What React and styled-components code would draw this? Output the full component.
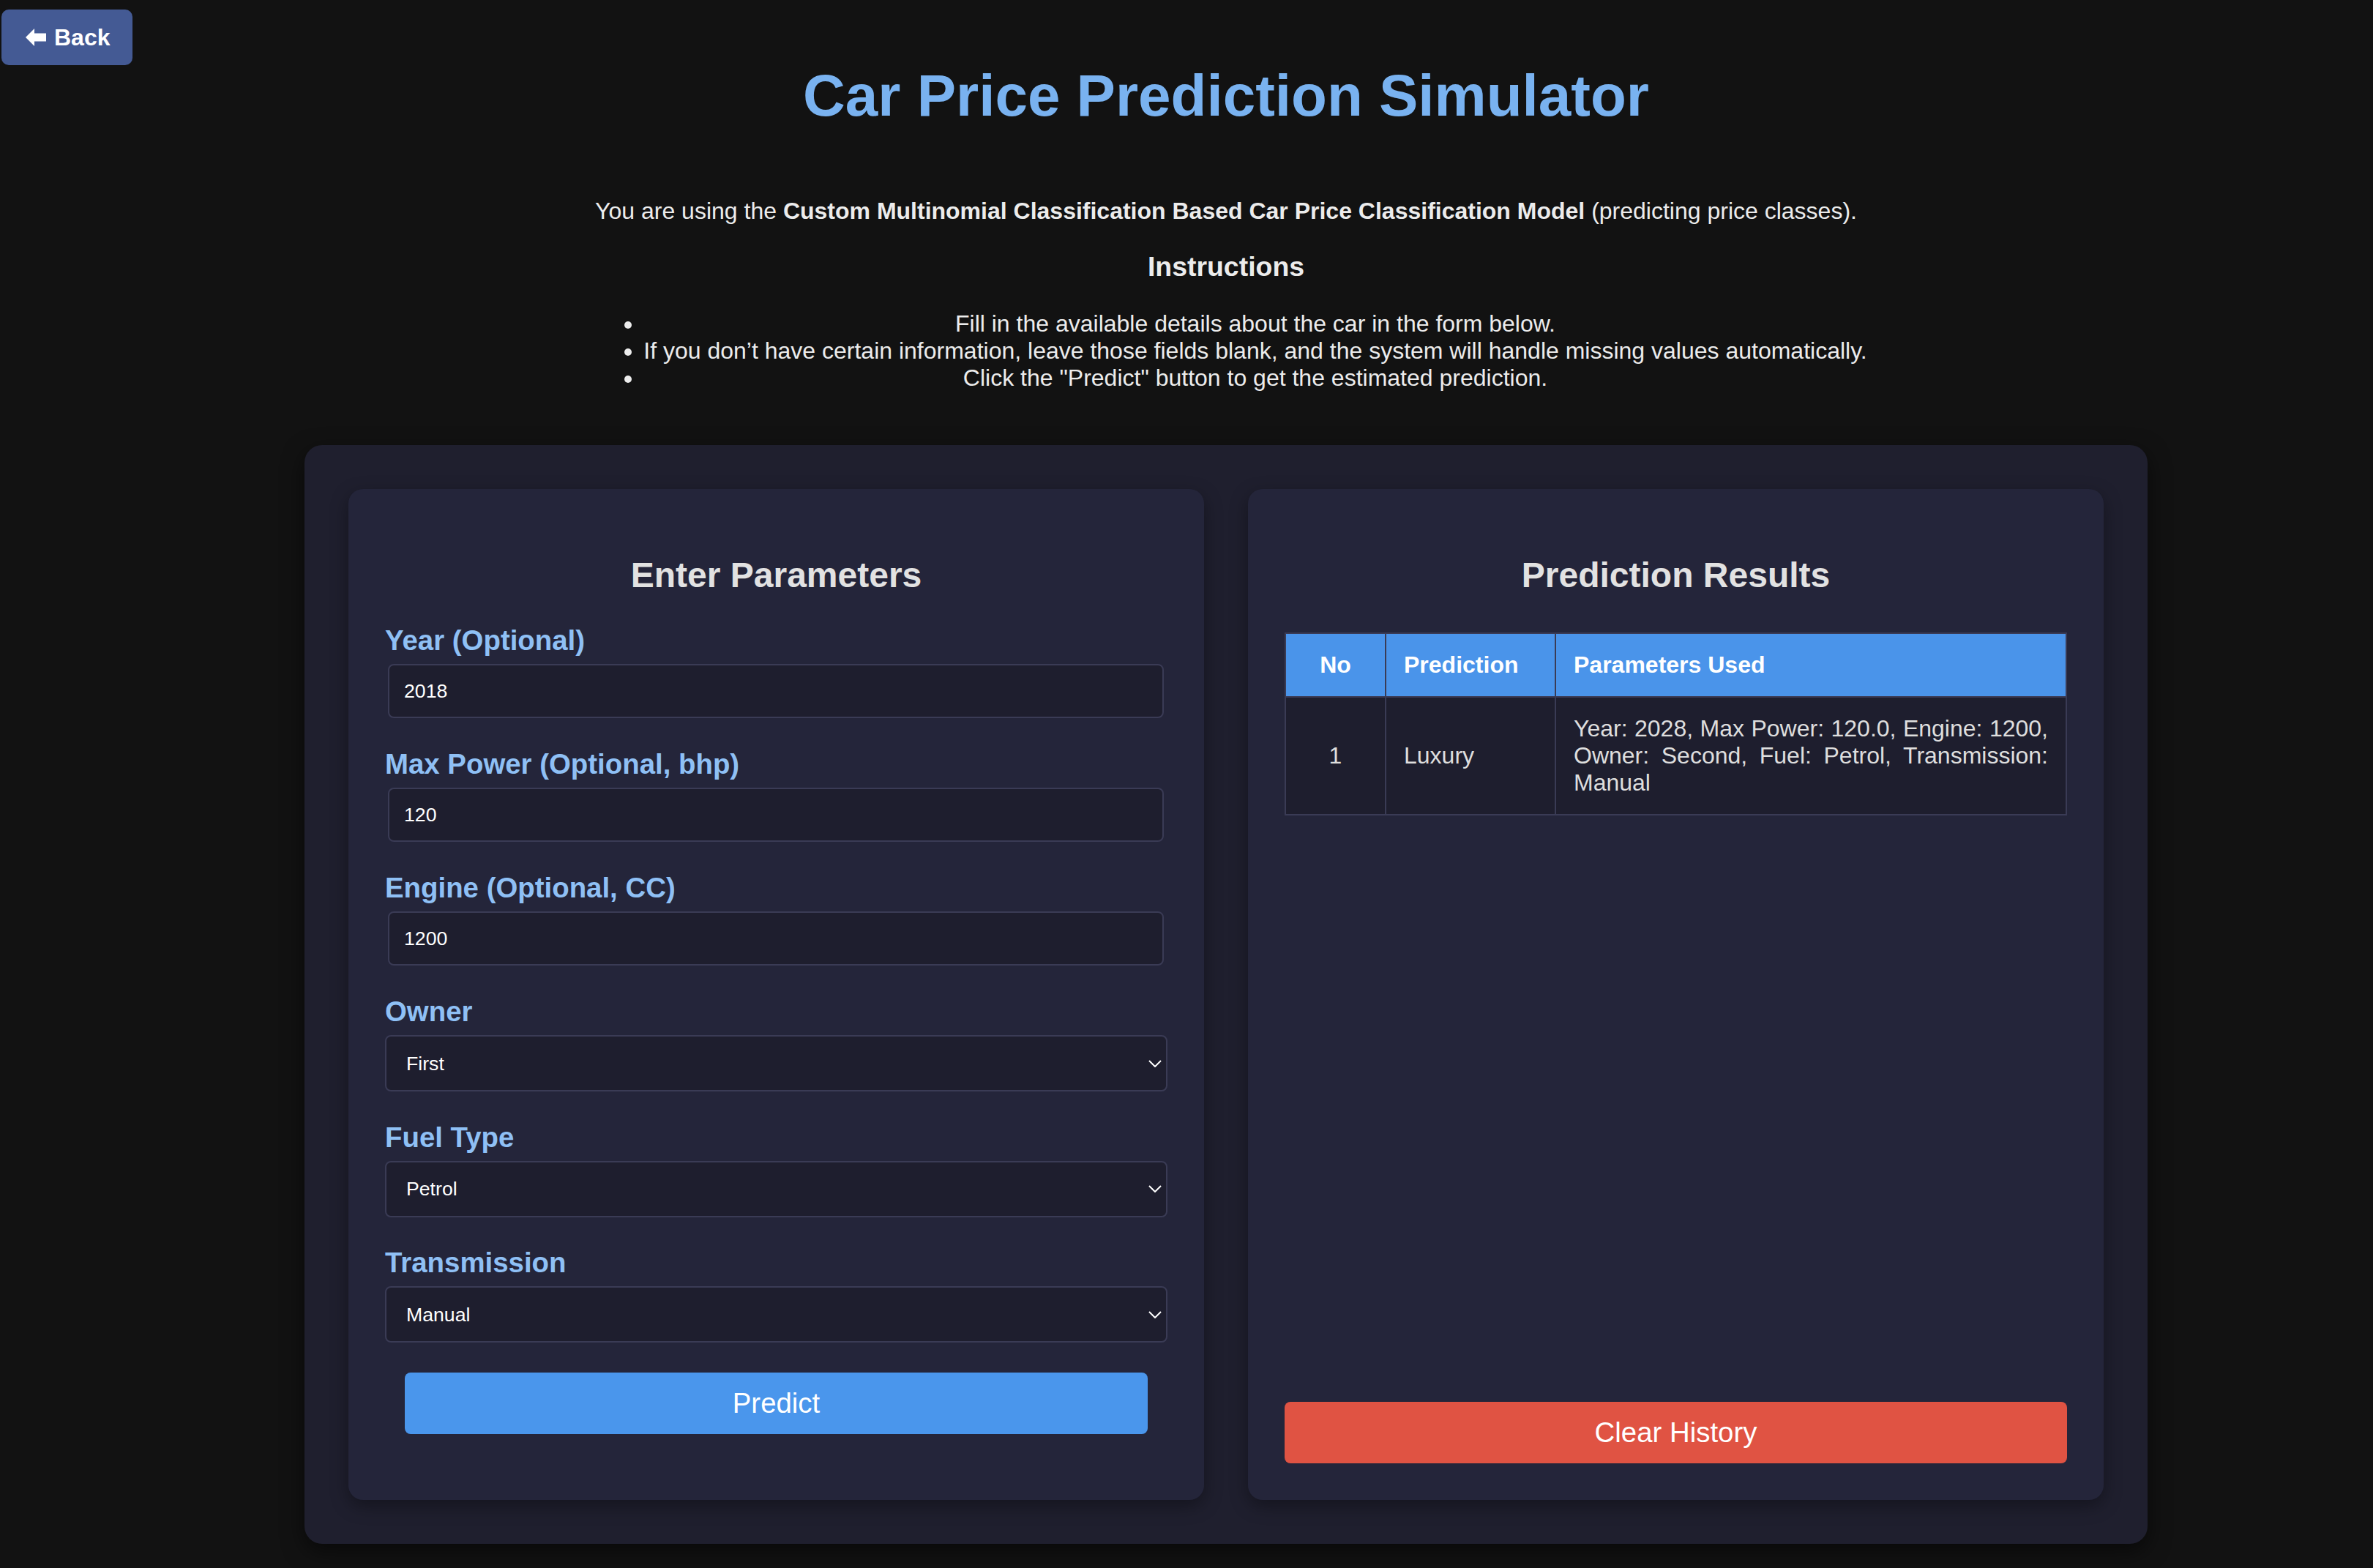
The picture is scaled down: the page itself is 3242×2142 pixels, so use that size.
import React, { useState } from 'react';
import styled, { createGlobalStyle } from 'styled-components';

const GlobalStyle = createGlobalStyle`
	html, body {
		margin: 0;
		padding: 0;
		background: #121212;
	}
	body {
		font-family: "Liberation Sans", Arial, Helvetica, sans-serif;
		color: #e8e8e8;
	}
	* {
		box-sizing: border-box;
	}
`;

const Page = styled.div`
	position: relative;
	min-height: 2142px;
	padding: 32px 0 32px 108px;
	text-align: center;
`;

const BackButton = styled.button`
	position: absolute;
	top: 13px;
	left: 2px;
	display: flex;
	align-items: center;
	gap: 11px;
	height: 76px;
	padding: 0 30px 0 33px;
	background: #445a94;
	color: #fff;
	border: none;
	border-radius: 10px;
	font: bold 32px "Liberation Sans", Arial, sans-serif;
	cursor: pointer;
`;

const Title = styled.h1`
	margin: 53px 0 0;
	font-size: 80px;
	line-height: 92px;
	font-weight: bold;
	color: #79b2f0;
`;

const Intro = styled.p`
	margin: 93px 0 0;
	font-size: 32px;
	line-height: 37px;
	color: #ececec;
`;

const SubTitle = styled.h3`
	margin: 36px 0 0;
	font-size: 37.44px;
	line-height: 43px;
	color: #ececec;
`;

const Steps = styled.ul`
	width: fit-content;
	margin: 38px auto 0;
	padding-left: 80px;
	font-size: 32px;
	line-height: 36.8px;
	color: #ececec;
	text-align: center;
`;

const MainCard = styled.div`
	display: grid;
	grid-template-columns: 1fr 1fr;
	gap: 60px;
	width: 2518px;
	margin: 74px auto 0;
	padding: 60px;
	background: #1f1f2e;
	border-radius: 24px;
	box-shadow: 0 10px 30px rgba(0, 0, 0, 0.55);
	text-align: left;
`;

const Panel = styled.div`
	display: flex;
	flex-direction: column;
	padding: 50px;
	background: #24253a;
	border-radius: 20px;
	box-shadow: 0 8px 24px rgba(0, 0, 0, 0.35);
`;

const PanelTitle = styled.h2`
	margin: 40px 0;
	text-align: center;
	font-size: 48px;
	line-height: 55px;
	color: #e2e2e2;
`;

const Field = styled.div`
	margin-bottom: ${props => (props.$select ? '40.5px' : '41px')};
`;

const Label = styled.label`
	display: block;
	margin-bottom: 10px;
	font-size: 38.4px;
	line-height: 44px;
	font-weight: bold;
	color: #8fc0f5;
`;

const TextInput = styled.input`
	display: block;
	width: calc(100% - 9px);
	height: 74px;
	margin: 0 5px 0 4px;
	padding: 0 20px;
	background: #1e1e2e;
	border: 2px solid #3a3b55;
	border-radius: 8px;
	color: #fff;
	font: 26.67px "Liberation Sans", Arial, sans-serif;
	outline: none;
`;

const SelectWrap = styled.div`
	position: relative;
`;

const Select = styled.select`
	display: block;
	width: 100%;
	height: 77px;
	padding: 0 50px 0 27px;
	appearance: none;
	background: #1e1e2e;
	border: 2px solid #3a3b55;
	border-radius: 8px;
	color: #fff;
	font: 26.67px "Liberation Sans", Arial, sans-serif;
	outline: none;
`;

const Chevron = styled.svg`
	position: absolute;
	right: 8px;
	top: 50%;
	margin-top: -5px;
	pointer-events: none;
`;

const ActionButton = styled.button`
	display: block;
	height: 84px;
	border: none;
	border-radius: 8px;
	color: #fff;
	font: 38.4px "Liberation Sans", Arial, sans-serif;
	cursor: pointer;
	background: ${props => (props.$danger ? '#e05343' : '#4a96ec')};
	width: ${props => (props.$danger ? '100%' : 'calc(100% - 54px)')};
	margin: ${props => (props.$danger ? 'auto 0 0' : '0 27px 40px')};
`;

const Table = styled.table`
	width: 100%;
	margin-top: 11px;
	table-layout: fixed;
	border-collapse: collapse;
	border: 2px solid #3a3b55;
	font-size: 32px;
	line-height: 37px;
`;

const Col = styled.col`
	width: ${props => (props.$width ? `${props.$width}px` : 'auto')};
`;

const Th = styled.th`
	padding: 24px;
	background: #4a94ea;
	border: 2px solid #3a3b55;
	color: #fff;
	font-weight: bold;
	text-align: ${props => (props.$center ? 'center' : 'left')};
`;

const Td = styled.td`
	padding: 24px;
	background: #1e1e2e;
	border: 2px solid #3a3b55;
	color: #dedede;
	vertical-align: middle;
	text-align: ${props => props.$align || 'left'};
`;

const ArrowIcon = () => (
	<svg width="28" height="24" viewBox="0 0 28 24">
		<polygon points="0,12 12,0 12,24" fill="#fff" />
		<rect x="11.5" y="6.5" width="16.5" height="11" fill="#fff" />
	</svg>
);

const ChevronIcon = () => (
	<Chevron width="18" height="10" viewBox="0 0 18 10">
		<polyline points="1,1 9,9 17,1" fill="none" stroke="#fff" strokeWidth="2" />
	</Chevron>
);

const history = [
	{
		no: 1,
		prediction: 'Luxury',
		params: 'Year: 2028, Max Power: 120.0, Engine: 1200, Owner: Second, Fuel: Petrol, Transmission: Manual',
	},
];

function App() {
	const [form, setForm] = useState({
		year: '2018',
		power: '120',
		engine: '1200',
		owner: 'First',
		fuel: 'Petrol',
		transmission: 'Manual',
	});

	const update = key => e => setForm({ ...form, [key]: e.target.value });

	return (
		<>
			<GlobalStyle />
			<Page>
				<BackButton>
					<ArrowIcon />
					Back
				</BackButton>

				<Title>Car Price Prediction Simulator</Title>
				<Intro>
					You are using the <b>Custom Multinomial Classification Based Car Price Classification Model</b>{' '}
					(predicting price classes).
				</Intro>
				<SubTitle>Instructions</SubTitle>
				<Steps>
					<li>Fill in the available details about the car in the form below.</li>
					<li>
						If you don’t have certain information, leave those fields blank, and the system will handle
						missing values automatically.
					</li>
					<li>Click the "Predict" button to get the estimated prediction.</li>
				</Steps>

				<MainCard>
					<Panel>
						<PanelTitle>Enter Parameters</PanelTitle>
						<Field>
							<Label>Year (Optional)</Label>
							<TextInput value={form.year} onChange={update('year')} />
						</Field>
						<Field>
							<Label>Max Power (Optional, bhp)</Label>
							<TextInput value={form.power} onChange={update('power')} />
						</Field>
						<Field>
							<Label>Engine (Optional, CC)</Label>
							<TextInput value={form.engine} onChange={update('engine')} />
						</Field>
						<Field $select>
							<Label>Owner</Label>
							<SelectWrap>
								<Select value={form.owner} onChange={update('owner')}>
									<option>First</option>
									<option>Second</option>
									<option>Third</option>
									<option>Fourth & Above</option>
								</Select>
								<ChevronIcon />
							</SelectWrap>
						</Field>
						<Field $select>
							<Label>Fuel Type</Label>
							<SelectWrap>
								<Select value={form.fuel} onChange={update('fuel')}>
									<option>Petrol</option>
									<option>Diesel</option>
								</Select>
								<ChevronIcon />
							</SelectWrap>
						</Field>
						<Field $select>
							<Label>Transmission</Label>
							<SelectWrap>
								<Select value={form.transmission} onChange={update('transmission')}>
									<option>Manual</option>
									<option>Automatic</option>
								</Select>
								<ChevronIcon />
							</SelectWrap>
						</Field>
						<ActionButton>Predict</ActionButton>
					</Panel>

					<Panel>
						<PanelTitle>Prediction Results</PanelTitle>
						<Table>
							<colgroup>
								<Col $width={137} />
								<Col $width={232} />
								<Col />
							</colgroup>
							<thead>
								<tr>
									<Th $center>No</Th>
									<Th>Prediction</Th>
									<Th>Parameters Used</Th>
								</tr>
							</thead>
							<tbody>
								{history.map(row => (
									<tr key={row.no}>
										<Td $align="center">{row.no}</Td>
										<Td>{row.prediction}</Td>
										<Td $align="justify">{row.params}</Td>
									</tr>
								))}
							</tbody>
						</Table>
						<ActionButton $danger>Clear History</ActionButton>
					</Panel>
				</MainCard>
			</Page>
		</>
	);
}

export default App;
